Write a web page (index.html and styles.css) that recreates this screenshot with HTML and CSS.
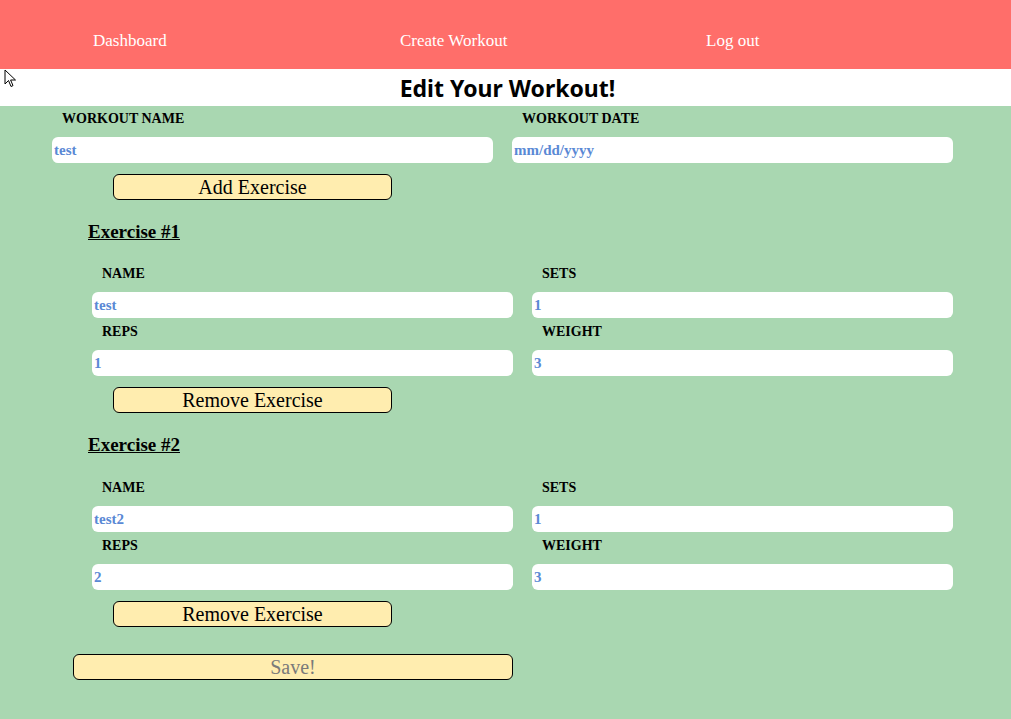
FILE: index.html
```
<!DOCTYPE html>
<html lang="en">
<head>
<meta charset="utf-8">
<title>Edit Workout</title>
<link rel="stylesheet" href="styles.css">
</head>
<body>
<nav class="topnav">
  <a class="navlink" href="#">Dashboard</a>
  <a class="navlink" href="#">Create Workout</a>
  <a class="navlink" href="#">Log out</a>
</nav>
<h1 class="title">Edit Your Workout!</h1>
<main class="content">
  <div class="top-row">
    <div class="field">
      <label class="label">WORKOUT NAME</label>
      <input class="input" type="text" value="test">
    </div>
    <div class="field">
      <label class="label">WORKOUT DATE</label>
      <input class="input" type="text" value="mm/dd/yyyy">
    </div>
  </div>
  <button class="btn btn-add">Add Exercise</button>

  <section class="exercise">
    <h3 class="ex-title">Exercise #1</h3>
    <div class="ex-grid">
      <div class="field"><label class="label">NAME</label><input class="input" type="text" value="test"></div>
      <div class="field"><label class="label">SETS</label><input class="input" type="text" value="1"></div>
      <div class="field"><label class="label">REPS</label><input class="input" type="text" value="1"></div>
      <div class="field"><label class="label">WEIGHT</label><input class="input" type="text" value="3"></div>
    </div>
    <button class="btn btn-remove">Remove Exercise</button>
  </section>

  <section class="exercise">
    <h3 class="ex-title">Exercise #2</h3>
    <div class="ex-grid">
      <div class="field"><label class="label">NAME</label><input class="input" type="text" value="test2"></div>
      <div class="field"><label class="label">SETS</label><input class="input" type="text" value="1"></div>
      <div class="field"><label class="label">REPS</label><input class="input" type="text" value="2"></div>
      <div class="field"><label class="label">WEIGHT</label><input class="input" type="text" value="3"></div>
    </div>
    <button class="btn btn-remove">Remove Exercise</button>
  </section>

  <button class="btn btn-save">Save!</button>
</main>
<svg class="cursor" width="14" height="20" viewBox="0 0 14 20"><path d="M1 1 L1 15 L4.5 11.5 L7 17.5 L9 16.6 L6.6 11 L11.5 11 Z" fill="#fff" stroke="#000" stroke-width="1"/></svg>
</body>
</html>
```
FILE: styles.css
```
html, body {
  margin: 0;
  padding: 0;
}
body {
  font-family: "Liberation Serif", "Times New Roman", serif;
  background: #a9d7b1;
  min-height: 719px;
  position: relative;
}
.topnav {
  height: 69px;
  background: #ff6e6a;
  display: grid;
  grid-template-columns: 307px 306px 307px;
  padding-left: 93px;
  padding-top: 12px;
  align-items: center;
  box-sizing: border-box;
}
.navlink {
  color: #fff;
  text-decoration: none;
  font-size: 17px;
  line-height: 20px;
}
.title {
  margin: 0;
  height: 37px;
  line-height: 38px;
  background: #fff;
  text-align: center;
  font-family: "Noto Sans", "Open Sans", sans-serif;
  font-weight: 700;
  font-size: 23px;
  color: #000;
  padding-left: 4px;
}
.content {
  padding: 0 0 38px 0;
}
.top-row {
  display: grid;
  grid-template-columns: 441px 441px;
  column-gap: 19px;
  padding-left: 52px;
}
.field {
  display: flex;
  flex-direction: column;
}
.label {
  display: block;
  font-weight: 700;
  font-size: 14px;
  line-height: 18px;
  padding-left: 10px;
  margin-top: 4px;
  margin-bottom: 9px;
  color: #000;
}
.input {
  height: 26px;
  box-sizing: border-box;
  border: none;
  border-radius: 6px;
  background: #fff;
  padding: 1px 2px 0;
  margin: 0;
  font-family: "Liberation Serif", "Times New Roman", serif;
  font-weight: 700;
  font-size: 15px;
  color: #5a89d5;
  outline: none;
}
.btn {
  display: block;
  height: 26px;
  box-sizing: border-box;
  background: #ffedaf;
  border: 1px solid #000;
  border-radius: 6px;
  font-family: "Liberation Serif", "Times New Roman", serif;
  font-size: 20px;
  line-height: 22px;
  color: #000;
  padding: 0;
}
.btn-add {
  width: 279px;
  margin: 11px 0 0 113px;
}
.exercise {
  padding-left: 92px;
}
.ex-title {
  margin: 22px 0 0 -4px;
  font-size: 19px;
  line-height: 20px;
  font-weight: 700;
  text-decoration: underline;
}
.ex-grid {
  display: grid;
  grid-template-columns: 421px 421px;
  column-gap: 19px;
  margin-top: 19px;
}
.exercise + .exercise .ex-grid {
  margin-top: 20px;
}
.ex-grid .label {
  margin-top: 4px;
  margin-bottom: 9px;
}
.ex-grid .input {
  margin-bottom: 1px;
}
.btn-remove {
  width: 279px;
  margin: 10px 0 0 21px;
}
.btn-save {
  width: 440px;
  margin: 27px 0 0 73px;
  color: #7a7a7a;
}
.cursor {
  position: absolute;
  left: 4px;
  top: 69px;
}
```
